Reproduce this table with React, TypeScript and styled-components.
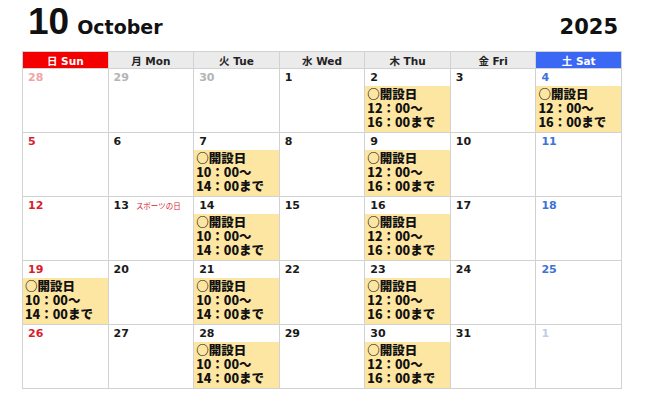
import React, { FC } from "react";
import styled, { createGlobalStyle } from "styled-components";

const GlobalStyle = createGlobalStyle`
  html, body {
    margin: 0;
    padding: 0;
    background: #ffffff;
  }
  body {
    font-family: "DejaVu Sans", "Noto Sans CJK JP", sans-serif;
  }
`;

type Tone = "normal" | "sun" | "sat" | "prevSun" | "prev" | "nextSat";

const toneColor: Record<Tone, string> = {
  normal: "#1a1a1a",
  sun: "#d8202c",
  sat: "#3e72d8",
  prevSun: "#f2a3a3",
  prev: "#b4b4b4",
  nextSat: "#c4cde6",
};

const Page = styled.div`
  width: 600px;
  margin-left: 22px;
`;

const TitleBar = styled.div`
  display: flex;
  align-items: baseline;
  justify-content: space-between;
  height: 51px;
  box-sizing: border-box;
  padding: 3px 4px 0 6px;
`;

const MonthGroup = styled.div`
  display: flex;
  align-items: baseline;
  gap: 8px;
`;

const MonthNumber = styled.span`
  font-family: "Liberation Sans", Arial, sans-serif;
  font-weight: 700;
  font-size: 37px;
  line-height: 1;
  color: #111;
`;

const MonthName = styled.span`
  font-family: "DejaVu Sans", sans-serif;
  font-weight: 700;
  font-size: 19px;
  line-height: 1;
  color: #111;
`;

const Year = styled.span`
  font-family: "DejaVu Sans", sans-serif;
  font-weight: 700;
  font-size: 21px;
  line-height: 1;
  color: #111;
`;

const Grid = styled.div`
  display: grid;
  grid-template-columns: repeat(7, 1fr);
  grid-template-rows: 17px repeat(5, 64px);
  border-top: 1px solid #d2d2d2;
  border-left: 1px solid #d2d2d2;
`;

const HeadCell = styled.div<{ $bg: string; $fg: string }>`
  display: flex;
  align-items: center;
  justify-content: center;
  background: ${(p) => p.$bg};
  color: ${(p) => p.$fg};
  font-family: "DejaVu Sans", "Noto Sans CJK JP", sans-serif;
  font-weight: 700;
  font-size: 10.5px;
  border-right: 1px solid #d2d2d2;
  border-bottom: 1px solid #d2d2d2;
`;

const DayCell = styled.div`
  display: flex;
  flex-direction: column;
  min-width: 0;
  border-right: 1px solid #d2d2d2;
  border-bottom: 1px solid #d2d2d2;
`;

const DateLine = styled.div`
  display: flex;
  align-items: baseline;
  gap: 7px;
  height: 17px;
  padding: 2px 0 0 5px;
  box-sizing: border-box;
`;

const DateNum = styled.span<{ $tone: Tone }>`
  font-family: "DejaVu Sans", sans-serif;
  font-weight: 700;
  font-size: 11px;
  color: ${(p) => toneColor[p.$tone]};
`;

const Holiday = styled.span`
  font-family: "Noto Sans CJK JP", sans-serif;
  font-size: 7.5px;
  color: #d8202c;
`;

const Event = styled.div`
  flex: 1;
  background: #fde6a2;
  padding: 1px 0 0 2px;
  font-family: "Noto Sans CJK JP", sans-serif;
  font-weight: 900;
  font-size: 12.5px;
  line-height: 14px;
  color: #111;
  white-space: pre;
`;

const heads = [
  { label: "日 Sun", bg: "#f50000", fg: "#ffffff" },
  { label: "月 Mon", bg: "#ebebeb", fg: "#222222" },
  { label: "火 Tue", bg: "#ebebeb", fg: "#222222" },
  { label: "水 Wed", bg: "#ebebeb", fg: "#222222" },
  { label: "木 Thu", bg: "#ebebeb", fg: "#222222" },
  { label: "金 Fri", bg: "#ebebeb", fg: "#222222" },
  { label: "土 Sat", bg: "#3a68f5", fg: "#ffffff" },
];

type Day = { n: number; tone: Tone; holiday?: string; event?: "am" | "pm" };

const events = {
  am: "○開設日\n10：00～\n14：00まで",
  pm: "○開設日\n12：00～\n16：00まで",
};

const amDays = [7, 14, 19, 21, 28];
const pmDays = [2, 4, 9, 16, 23, 30];

const buildDays = (): Day[] => {
  const days: Day[] = [
    { n: 28, tone: "prevSun" },
    { n: 29, tone: "prev" },
    { n: 30, tone: "prev" },
  ];
  for (let n = 1; n <= 31; n++) {
    const col = (n + 2) % 7;
    const tone: Tone = col === 0 ? "sun" : col === 6 ? "sat" : "normal";
    days.push({
      n,
      tone,
      holiday: n === 13 ? "スポーツの日" : undefined,
      event: amDays.includes(n) ? "am" : pmDays.includes(n) ? "pm" : undefined,
    });
  }
  days.push({ n: 1, tone: "nextSat" });
  return days;
};

const App: FC = () => {
  const days = buildDays();
  return (
    <>
      <GlobalStyle />
      <Page>
        <TitleBar>
          <MonthGroup>
            <MonthNumber>10</MonthNumber>
            <MonthName>October</MonthName>
          </MonthGroup>
          <Year>2025</Year>
        </TitleBar>
        <Grid>
          {heads.map((h) => (
            <HeadCell key={h.label} $bg={h.bg} $fg={h.fg}>
              {h.label}
            </HeadCell>
          ))}
          {days.map((d, i) => (
            <DayCell key={i}>
              <DateLine>
                <DateNum $tone={d.tone}>{d.n}</DateNum>
                {d.holiday && <Holiday>{d.holiday}</Holiday>}
              </DateLine>
              {d.event && <Event>{events[d.event]}</Event>}
            </DayCell>
          ))}
        </Grid>
      </Page>
    </>
  );
};

export default App;
